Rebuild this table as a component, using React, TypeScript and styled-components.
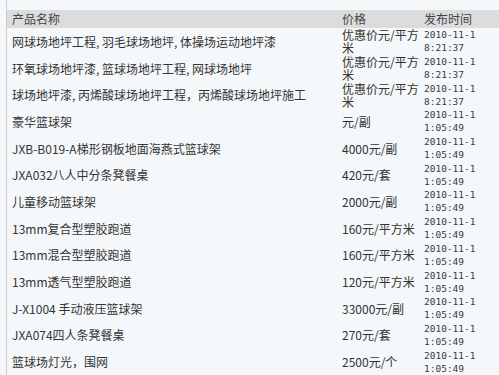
import styled, { createGlobalStyle } from 'styled-components';

const Global = createGlobalStyle`
    html, body {
        margin: 0;
        padding: 0;
        background: #f5f8fa;
    }
`;

const Wrapper = styled.div`
    margin-left: 6px;
    border-left: 1px solid #c9cdd0;
    padding-top: 10px;
    height: 365px;
    overflow: hidden;
    font-family: "Noto Sans CJK SC", "Liberation Sans", sans-serif;
    font-size: 12px;
    color: #333;
`;

const Row = styled.div<{ $head?: boolean }>`
    display: grid;
    grid-template-columns: 329px 82px 1fr;
    align-items: center;
    height: ${(p) => (p.$head ? '18px' : '26.7px')};
    background: ${(p) => (p.$head ? '#dcdcdc' : 'transparent')};
    color: ${(p) => (p.$head ? '#444' : '#333')};
`;

const Name = styled.div`
    padding-left: 5px;
    line-height: 13px;
    white-space: nowrap;
`;

const Price = styled.div`
    padding-left: 6px;
    line-height: 13px;
    width: 80px;
`;

const Time = styled.div`
    padding-left: 6px;
    width: 56px;
    line-height: 13px;
    font-family: "DejaVu Sans Mono", monospace;
    font-size: 9.5px;
    color: #3a3a3a;
`;

const HeadCell = styled.div`
    padding-left: 5px;
    line-height: 18px;
`;

const rows = [
    ['网球场地坪工程, 羽毛球场地坪, 体操场运动地坪漆', '优惠价元/平方米', '2010-11-1 8:21:37'],
    ['环氧球场地坪漆, 篮球场地坪工程, 网球场地坪', '优惠价元/平方米', '2010-11-1 8:21:37'],
    ['球场地坪漆, 丙烯酸球场地坪工程，丙烯酸球场地坪施工', '优惠价元/平方米', '2010-11-1 8:21:37'],
    ['豪华篮球架', '元/副', '2010-11-1 1:05:49'],
    ['JXB-B019-A梯形钢板地面海燕式篮球架', '4000元/副', '2010-11-1 1:05:49'],
    ['JXA032八人中分条凳餐桌', '420元/套', '2010-11-1 1:05:49'],
    ['儿童移动篮球架', '2000元/副', '2010-11-1 1:05:49'],
    ['13mm复合型塑胶跑道', '160元/平方米', '2010-11-1 1:05:49'],
    ['13mm混合型塑胶跑道', '160元/平方米', '2010-11-1 1:05:49'],
    ['13mm透气型塑胶跑道', '120元/平方米', '2010-11-1 1:05:49'],
    ['J-X1004 手动液压篮球架', '33000元/副', '2010-11-1 1:05:49'],
    ['JXA074四人条凳餐桌', '270元/套', '2010-11-1 1:05:49'],
    ['篮球场灯光，围网', '2500元/个', '2010-11-1 1:05:49'],
];

function App() {
    return (
        <>
            <Global />
            <Wrapper>
                <Row $head>
                    <HeadCell>产品名称</HeadCell>
                    <HeadCell style={{ paddingLeft: 6 }}>价格</HeadCell>
                    <HeadCell style={{ paddingLeft: 6 }}>发布时间</HeadCell>
                </Row>
                {rows.map(([name, price, time]) => (
                    <Row key={name}>
                        <Name>{name}</Name>
                        <Price>{price}</Price>
                        <Time>{time}</Time>
                    </Row>
                ))}
            </Wrapper>
        </>
    );
}

export default App;
